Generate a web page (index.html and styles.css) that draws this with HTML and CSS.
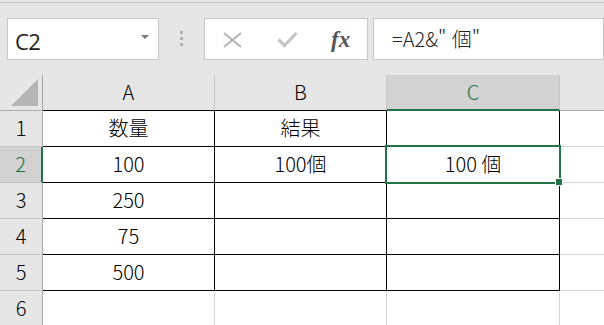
FILE: index.html
```html
<!DOCTYPE html>
<html lang="ja">
<head>
<meta charset="utf-8">
<title>Excel</title>
<link rel="stylesheet" href="styles.css">
</head>
<body>
<div class="app">
  <div class="topline"></div>
  <div class="formula-bar">
    <div class="namebox">
      <span class="name">C2</span>
      <svg class="dd" width="8" height="4" viewBox="0 0 8 4"><polygon points="0,0 8,0 4,4" fill="#777"/></svg>
    </div>
    <div class="grip"><i></i><i></i><i></i></div>
    <div class="fxbox">
      <svg class="ico-x" width="19" height="16" viewBox="0 0 19 16"><path d="M1 1 L18 15 M18 1 L1 15" stroke="#b3b3b3" stroke-width="2" fill="none"/></svg>
      <svg class="ico-ok" width="21" height="17" viewBox="0 0 21 17"><path d="M1.5 8.5 L7.5 14.5 L19.5 2" stroke="#c4c4c4" stroke-width="3.2" fill="none"/></svg>
      <span class="fx">fx</span>
    </div>
    <div class="formula">=A2&amp;" 個"</div>
  </div>
  <div class="sheet">
    <div class="cell corner"><svg width="30" height="29" viewBox="0 0 30 29"><polygon points="28,1 28,28 1,28" fill="#b5b5b5"/></svg></div>
    <div class="cell ch blk">A</div>
    <div class="cell ch blk">B</div>
    <div class="cell ch sel">C</div>
    <div class="cell ch last"></div>

    <div class="cell rh">1</div>
    <div class="cell b">数量</div>
    <div class="cell b">結果</div>
    <div class="cell b"></div>
    <div class="cell last"></div>

    <div class="cell rh sel">2</div>
    <div class="cell b">100</div>
    <div class="cell b">100個</div>
    <div class="cell b">100 個</div>
    <div class="cell last"></div>

    <div class="cell rh">3</div>
    <div class="cell b">250</div>
    <div class="cell b"></div>
    <div class="cell b"></div>
    <div class="cell last"></div>

    <div class="cell rh">4</div>
    <div class="cell b">75</div>
    <div class="cell b"></div>
    <div class="cell b"></div>
    <div class="cell last"></div>

    <div class="cell rh">5</div>
    <div class="cell b">500</div>
    <div class="cell b"></div>
    <div class="cell b"></div>
    <div class="cell last"></div>

    <div class="cell rh">6</div>
    <div class="cell"></div>
    <div class="cell"></div>
    <div class="cell"></div>
    <div class="cell last"></div>

    <div class="selection"></div>
    <div class="handle"></div>
  </div>
</div>
</body>
</html>
```

FILE: styles.css
```css
* { box-sizing: border-box; }
html, body { margin: 0; padding: 0; }
body { background: #e6e6e6; }

.app {
  width: 604px;
  height: 325px;
  overflow: hidden;
  background: #e6e6e6;
  font-family: "Noto Sans CJK JP", "Noto Sans", sans-serif;
  font-weight: 300;
  color: #000;
}

.topline {
  height: 3px;
  border-bottom: 1px solid #c8c8c8;
}

.formula-bar {
  display: flex;
  align-items: stretch;
  height: 42px;
  margin-top: 15px;
  margin-bottom: 15px;
}

.namebox {
  margin-left: 7px;
  width: 152px;
  background: #fff;
  border: 1px solid #c6c6c6;
  display: flex;
  align-items: center;
  justify-content: space-between;
  padding: 4px 9px 0 7px;
}
.name {
  font-family: "Open Sans", "Noto Sans", sans-serif;
  font-weight: 400;
  font-size: 22px;
  color: #222;
  letter-spacing: -0.5px;
}
.dd { margin-top: -8px; }

.grip {
  width: 45px;
  display: flex;
  flex-direction: column;
  align-items: center;
  justify-content: center;
  gap: 3px;
  padding-bottom: 2px;
}
.grip i {
  display: block;
  width: 3px;
  height: 3px;
  background: #b0b0b0;
}

.fxbox {
  width: 164px;
  background: #fff;
  border: 1px solid #c6c6c6;
  display: flex;
  align-items: center;
  padding-left: 18px;
}
.ico-x { margin-top: 1px; }
.ico-ok { margin-left: 35px; margin-top: 1px; }
.fx {
  margin-left: 33px;
  font-family: "Liberation Serif", serif;
  font-style: italic;
  font-weight: bold;
  font-size: 23px;
  color: #555;
  margin-top: 2px;
}

.formula {
  margin-left: 5px;
  width: 231px;
  background: #fff;
  border: 1px solid #c6c6c6;
  display: flex;
  align-items: center;
  padding-left: 18px;
  padding-bottom: 2px;
  font-size: 20px;
  color: #222;
  word-spacing: 1px;
}

.sheet {
  position: relative;
  display: grid;
  grid-template-columns: 43px 172px 172px 173px 44px;
  grid-auto-rows: 36px;
  font-size: 20px;
}

.cell {
  display: flex;
  align-items: center;
  justify-content: center;
  background: #fff;
  border-right: 1px solid #d4d4d4;
  border-bottom: 1px solid #d4d4d4;
  white-space: nowrap;
  padding-bottom: 2px;
}
.cell.last { border-right: none; }
.cell.b { border-right-color: #000; border-bottom-color: #000; }

.corner {
  background: #e6e6e6;
  border-right-color: #a8a8a8;
  border-bottom-color: #ababab;
  justify-content: flex-start;
  align-items: flex-start;
  padding: 3px 0 0 10px;
}

.ch {
  background: #e6e6e6;
  border-right-color: #c4c4c4;
  border-bottom-color: #ababab;
}
.ch.blk { border-bottom-color: #000; }
.ch.sel {
  background: #d2d2d2;
  color: #217346;
  border-bottom: 2px solid #217346;
  padding-bottom: 1px;
}

.rh {
  background: #e6e6e6;
  border-right-color: #a8a8a8;
  border-bottom-color: #c4c4c4;
}
.rh.sel {
  background: #d2d2d2;
  color: #217346;
  border-right: 2px solid #217346;
}

.selection {
  position: absolute;
  left: 385px;
  top: 70px;
  width: 176px;
  height: 39px;
  border: 2px solid #217346;
  pointer-events: none;
}
.handle {
  position: absolute;
  left: 555px;
  top: 103px;
  width: 8px;
  height: 8px;
  background: #217346;
  border: 1px solid #fff;
}
```
